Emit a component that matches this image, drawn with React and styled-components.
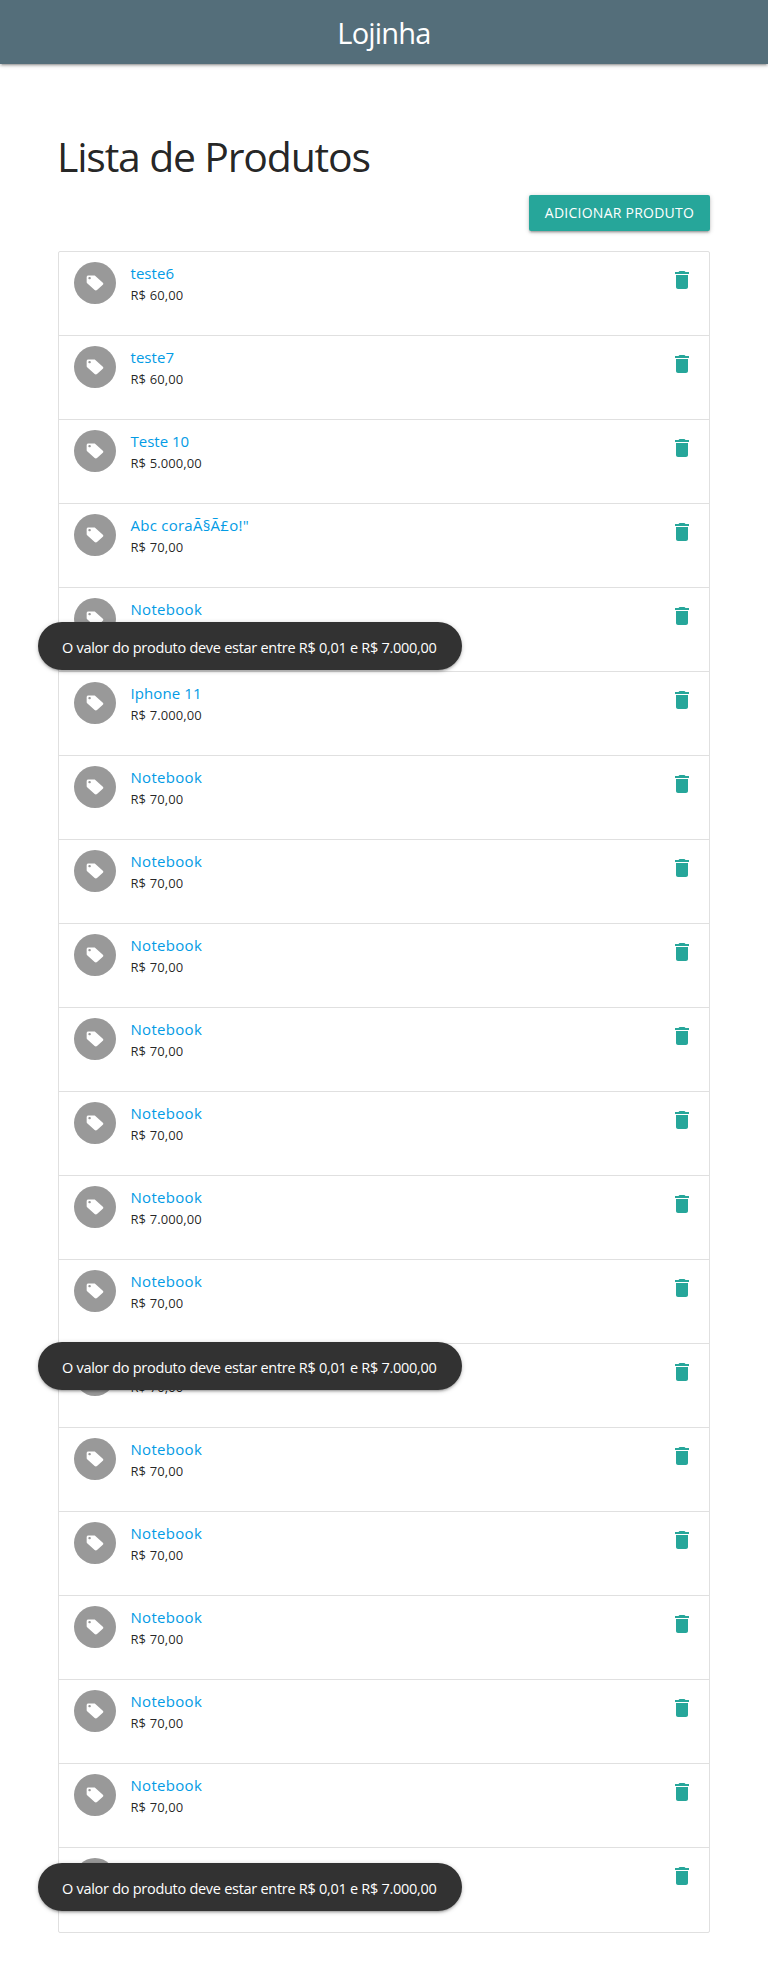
import React from "react";
import styled, { createGlobalStyle } from "styled-components";

const Global = createGlobalStyle`
  *, *::before, *::after { box-sizing: border-box; }
  body {
    margin: 0;
    background: #fff;
    color: rgba(0, 0, 0, 0.87);
    font-family: "Open Sans", "Noto Sans", sans-serif;
    font-size: 15px;
    line-height: 1.5;
  }
`;

const Page = styled.div`
  position: relative;
  height: 1961px;
  overflow: hidden;
`;

const Nav = styled.nav`
  height: 64px;
  padding-top: 1px;
  background: #546e7a;
  color: #fff;
  text-align: center;
  box-shadow: 0 2px 2px 0 rgba(0, 0, 0, 0.14), 0 3px 1px -2px rgba(0, 0, 0, 0.12), 0 1px 5px 0 rgba(0, 0, 0, 0.2);
`;

const Brand = styled.a`
  font-size: 29px;
  line-height: 64px;
  letter-spacing: -0.8px;
  white-space: nowrap;
`;

const Container = styled.main`
  width: 652px;
  margin: 0 auto;
  padding-top: 67px;
`;

const Title = styled.h1`
  margin: 0 0 0 -1px;
  font-size: 41px;
  font-weight: 400;
  line-height: 51px;
  letter-spacing: -1.2px;
  white-space: nowrap;
`;

const Actions = styled.div`
  display: flex;
  justify-content: flex-end;
  margin: 13px 0 20px;
`;

const AddButton = styled.button`
  width: 181px;
  height: 36px;
  padding: 0;
  border: 0;
  border-radius: 2px;
  background: #26a69a;
  color: #fff;
  font: 400 14px/36px "Open Sans", sans-serif;
  letter-spacing: 0.25px;
  text-transform: uppercase;
  white-space: nowrap;
  box-shadow: 0 2px 2px 0 rgba(0, 0, 0, 0.14), 0 3px 1px -2px rgba(0, 0, 0, 0.12), 0 1px 5px 0 rgba(0, 0, 0, 0.2);
`;

const Collection = styled.ul`
  margin: 0;
  padding: 0;
  list-style: none;
  border: 1px solid #e0e0e0;
  border-radius: 2px;
`;

const Item = styled.li`
  display: flex;
  height: 84px;
  padding: 10px 15px;
  border-bottom: 1px solid #e0e0e0;
  &:last-child { border-bottom: 0; }
`;

const Avatar = styled.span`
  display: flex;
  align-items: center;
  justify-content: center;
  flex: none;
  width: 42px;
  height: 42px;
  border-radius: 50%;
  background: #999;
  color: #fff;
`;

const Details = styled.div`
  flex: 1;
  margin-left: 14.5px;
  white-space: nowrap;
`;

const Name = styled.a`
  display: block;
  height: 23px;
  color: #039be5;
  font-size: 15px;
  line-height: 22px;
  letter-spacing: ${(p) => p.$tracking || 0}px;
`;

const Price = styled.p`
  margin: 0;
  font-size: 13px;
  line-height: 20px;
  letter-spacing: 0.1px;
`;

const Remove = styled.a`
  flex: none;
  height: 24px;
  margin-top: 6px;
  color: #26a69a;
`;

const Icon = styled.svg`
  display: block;
  width: ${(p) => p.$width}px;
  height: ${(p) => p.$height || p.$width}px;
  fill: currentColor;
`;

const Toast = styled.div`
  position: absolute;
  top: ${(p) => p.$top}px;
  left: 38px;
  width: 424px;
  height: 48px;
  padding: 2px 24px 0;
  border-radius: 24px;
  background: #323232;
  color: #fff;
  font-size: 14.5px;
  font-weight: 400;
  line-height: 48px;
  letter-spacing: -0.28px;
  white-space: nowrap;
  box-shadow: 0 2px 2px 0 rgba(0, 0, 0, 0.14), 0 3px 1px -2px rgba(0, 0, 0, 0.12), 0 1px 5px 0 rgba(0, 0, 0, 0.2);
`;

const notebook = (price) => ({ name: "Notebook", price, tracking: 0.3 });

const products = [
  { name: "teste6", price: "60,00", tracking: 0.05 },
  { name: "teste7", price: "60,00", tracking: 0.05 },
  { name: "Teste 10", price: "5.000,00", tracking: 0 },
  { name: 'Abc coraÃ§Ã£o!"', price: "70,00", tracking: 0.25 },
  notebook("70,00"),
  { name: "Iphone 11", price: "7.000,00", tracking: 0.1 },
  ...Array.from({ length: 5 }, () => notebook("70,00")),
  notebook("7.000,00"),
  ...Array.from({ length: 8 }, () => notebook("70,00")),
];

const toastTops = [622, 1342, 1863];

const TagIcon = () => (
  <Icon $width={20} $height={18} viewBox="0 0 24 24" preserveAspectRatio="none">
    <path d="M21.41 11.58l-9-9C12.05 2.22 11.55 2 11 2H4c-1.1 0-2 .9-2 2v7c0 .55.22 1.05.59 1.42l9 9c.36.36.86.58 1.41.58s1.05-.22 1.41-.59l7-7c.37-.36.59-.86.59-1.41s-.23-1.06-.59-1.42zM5.5 7C4.67 7 4 6.33 4 5.5S4.67 4 5.5 4 7 4.67 7 5.5 6.33 7 5.5 7z" />
  </Icon>
);

const TrashIcon = () => (
  <Icon $width={24} viewBox="0 0 24 24">
    <path d="M6 19c0 1.1.9 2 2 2h8c1.1 0 2-.9 2-2V7H6v12zM19 4h-3.5l-1-1h-5l-1 1H5v2h14V4z" />
  </Icon>
);

export default function App() {
  return (
    <Page>
      <Global />
      <Nav><Brand>Lojinha</Brand></Nav>
      <Container>
        <Title>Lista de Produtos</Title>
        <Actions><AddButton>Adicionar Produto</AddButton></Actions>
        <Collection>
          {products.map((p, i) => (
            <Item key={i}>
              <Avatar><TagIcon /></Avatar>
              <Details>
                <Name $tracking={p.tracking}>{p.name}</Name>
                <Price>R$ {p.price}</Price>
              </Details>
              <Remove><TrashIcon /></Remove>
            </Item>
          ))}
        </Collection>
      </Container>
      {toastTops.map((top) => (
        <Toast key={top} $top={top}>O valor do produto deve estar entre R$ 0,01 e R$ 7.000,00</Toast>
      ))}
    </Page>
  );
}
